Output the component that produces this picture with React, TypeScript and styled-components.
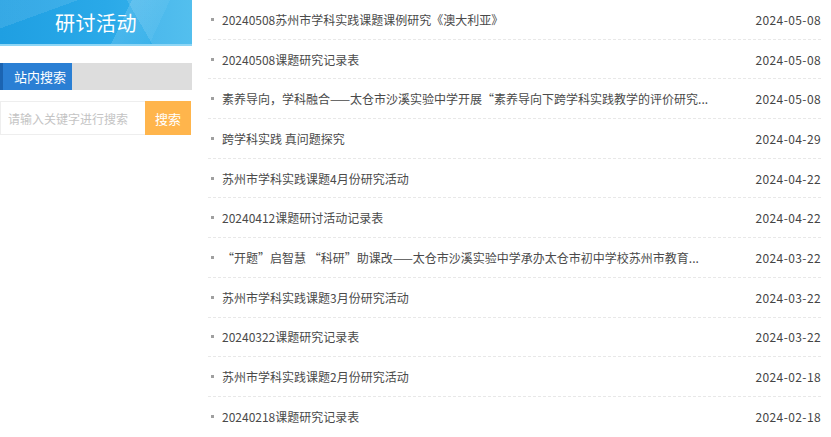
import React from 'react'
import styled, { createGlobalStyle } from 'styled-components'

type Item = {
  title: string
  date: string
}

const items: Item[] = [
  { title: '20240508苏州市学科实践课题课例研究《澳大利亚》', date: '2024-05-08' },
  { title: '20240508课题研究记录表', date: '2024-05-08' },
  { title: '素养导向，学科融合——太仓市沙溪实验中学开展“素养导向下跨学科实践教学的评价研究...', date: '2024-05-08' },
  { title: '跨学科实践 真问题探究', date: '2024-04-29' },
  { title: '苏州市学科实践课题4月份研究活动', date: '2024-04-22' },
  { title: '20240412课题研讨活动记录表', date: '2024-04-22' },
  { title: '“开题”启智慧 “科研”助课改——太仓市沙溪实验中学承办太仓市初中学校苏州市教育...', date: '2024-03-22' },
  { title: '苏州市学科实践课题3月份研究活动', date: '2024-03-22' },
  { title: '20240322课题研究记录表', date: '2024-03-22' },
  { title: '苏州市学科实践课题2月份研究活动', date: '2024-02-18' },
  { title: '20240218课题研究记录表', date: '2024-02-18' },
]

const GlobalStyle = createGlobalStyle`
  body {
    margin: 0;
    background: #fff;
    font-family: "Noto Sans CJK SC", "Noto Sans", sans-serif;
    color: #333;
  }
`

export default function App() {
  return (
    <>
      <GlobalStyle />
      <Page>
        <Sidebar>
          <Banner>研讨活动</Banner>
          <SearchHead>
            <SearchTab>站内搜索</SearchTab>
          </SearchHead>
          <SearchForm>
            <SearchInput placeholder="请输入关键字进行搜索" />
            <SearchButton>搜索</SearchButton>
          </SearchForm>
        </Sidebar>
        <NewsList>
          {items.map((item, i) => (
            <NewsRow key={i}>
              <Bullet />
              <Title>{item.title}</Title>
              <DateText>{item.date}</DateText>
            </NewsRow>
          ))}
        </NewsList>
      </Page>
    </>
  )
}

const Page = styled.div`
  display: flex;
  align-items: flex-start;
  gap: 16px;
  width: 821px;
`

const Sidebar = styled.div`
  width: 192px;
  flex-shrink: 0;
  display: flex;
  flex-direction: column;
`

const Banner = styled.div`
  height: 44px;
  border-bottom: 2px solid #8ed6f5;
  display: flex;
  align-items: center;
  justify-content: center;
  color: #fff;
  font-size: 20px;
  letter-spacing: 0.5px;
  background:
    linear-gradient(115deg, transparent 62%, rgba(255, 255, 255, 0.14) 62%, rgba(255, 255, 255, 0.05) 80%, transparent 80%),
    linear-gradient(60deg, transparent 70%, rgba(255, 255, 255, 0.12) 70%),
    linear-gradient(160deg, rgba(255, 255, 255, 0.1) 0%, rgba(255, 255, 255, 0.1) 25%, transparent 25%),
    linear-gradient(90deg, #1f9fe2 0%, #2aa9e8 55%, #3bb6ec 100%);
`

const SearchHead = styled.div`
  margin-top: 17px;
  height: 27px;
  background: #dddddd;
  display: flex;
`

const SearchTab = styled.div`
  width: 72px;
  border-left: 3px solid #1b64b2;
  background: #2a7fd4;
  color: #fff;
  font-size: 13px;
  line-height: 27px;
  padding-left: 11px;
  box-sizing: border-box;
  white-space: nowrap;
`

const SearchForm = styled.div`
  margin-top: 11px;
  display: flex;
  height: 34px;
`

const SearchInput = styled.input`
  width: 145px;
  box-sizing: border-box;
  border: 1px solid #eeeeee;
  border-right: none;
  outline: none;
  padding: 0 0 0 7px;
  font-family: "Noto Sans CJK SC", sans-serif;
  font-size: 12px;
  color: #333;
  &::placeholder {
    color: #c4c4c4;
  }
`

const SearchButton = styled.button`
  width: 46px;
  border: none;
  background: #ffb54c;
  color: #fff;
  font-family: "Noto Sans CJK SC", sans-serif;
  font-size: 13px;
  padding: 0;
  cursor: pointer;
`

const NewsList = styled.ul`
  list-style: none;
  margin: 0;
  padding: 0;
  flex: 1;
  min-width: 0;
`

const NewsRow = styled.li`
  height: 39.7px;
  box-sizing: border-box;
  border-bottom: 1px dashed #e8e8e8;
  display: flex;
  align-items: center;
  padding-left: 3px;
  font-size: 12px;
  &:last-child {
    border-bottom: none;
  }
`

const Bullet = styled.span`
  width: 3px;
  height: 3px;
  background: #a0a0a0;
  margin-right: 8px;
  flex-shrink: 0;
`

const Title = styled.span`
  flex: 1;
  min-width: 0;
  color: #4a4a4a;
  white-space: nowrap;
  overflow: hidden;
`

const DateText = styled.span`
  flex-shrink: 0;
  color: #444;
  margin-left: 20px;
  letter-spacing: 0.4px;
  white-space: nowrap;
`
